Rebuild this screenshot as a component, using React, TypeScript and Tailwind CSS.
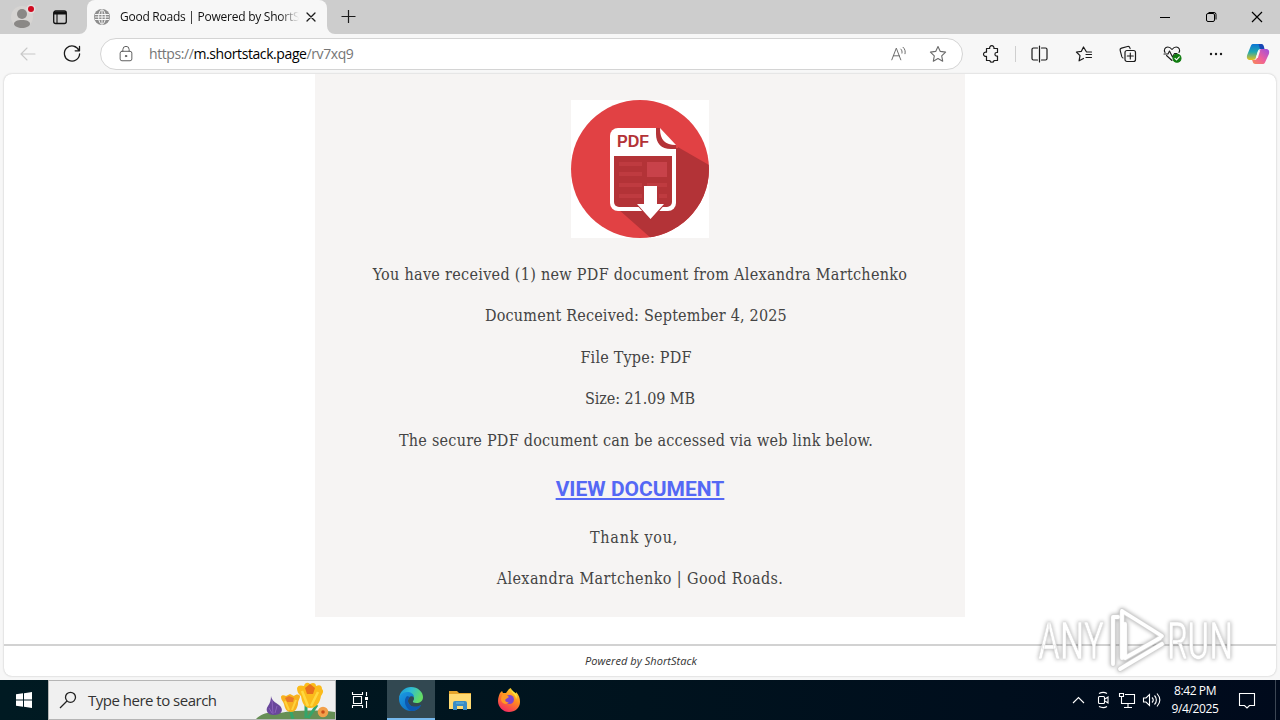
import type { ReactNode } from 'react'

const LINES = [
  { text: 'You have received (1) new PDF document from Alexandra Martchenko', className: 'tracking-[0.3px]' },
  { text: 'Document Received: September 4, 2025', className: 'pr-2 tracking-[0.2px]' },
  { text: 'File Type: PDF', className: 'pr-2 tracking-[0.2px]' },
  { text: 'Size: 21.09 MB', className: 'tracking-[-0.08px]' },
  { text: 'The secure PDF document can be accessed via web link below.', className: 'pr-2 tracking-[0.25px]' },
]

const SIGNATURE = [
  { text: 'Thank you,', className: 'pr-3 tracking-[0.75px]' },
  { text: 'Alexandra Martchenko | Good Roads.', className: 'tracking-[0.4px]' },
]

function Icon({ children, size = 20, className = '' }: { children: ReactNode; size?: number; className?: string }) {
  return (
    <svg
      width={size}
      height={size}
      viewBox="0 0 20 20"
      fill="none"
      stroke="currentColor"
      strokeWidth="1.1"
      strokeLinecap="round"
      strokeLinejoin="round"
      className={`shrink-0 ${className}`}
    >
      {children}
    </svg>
  )
}

function TabBar() {
  return (
    <div className="h-[34px] flex bg-[#cdcdcd]">
      <div className="w-[87px] flex items-center">
        <svg width="28" height="28" viewBox="0 0 28 28" className="ml-2 shrink-0">
          <circle cx="14" cy="14" r="11" fill="#d6d4d2" />
          <circle cx="14" cy="11" r="5" fill="#8a8886" />
          <path d="M6 21c0-2.500 3-4 8-4s8 1.500 8 4c0 2-4 4-8 4s-8-2-8-4z" fill="#8a8886" />
          <circle cx="23" cy="6" r="4.500" fill="#e5dcdc" />
          <circle cx="23" cy="6" r="3" fill="#d00a20" />
        </svg>
        <svg width="16" height="16" viewBox="0 0 16 16" fill="none" stroke="#111" className="ml-4">
          <rect x="1.700" y="2" width="12.600" height="12.500" rx="2" strokeWidth="1.300" />
          <path d="M2 4h12" strokeWidth="3" />
          <path d="M5 5v9" strokeWidth="1.100" />
        </svg>
      </div>
      <div className="relative w-[240px] flex items-center bg-[#f7f7f7] rounded-t-lg">
        <svg width="8" height="8" className="absolute -left-2 bottom-0"><path d="M8 0v8H0a8 8 0 0 0 8-8z" fill="#f7f7f7" /></svg>
        <svg width="8" height="8" className="absolute -right-2 bottom-0"><path d="M0 0v8h8a8 8 0 0 1-8-8z" fill="#f7f7f7" /></svg>
        <svg width="16" height="16" viewBox="0 0 16 16" fill="none" stroke="#f7f7f7" className="ml-[7px] shrink-0">
          <circle cx="8" cy="8" r="8" fill="#8d8d8d" stroke="none" />
          <ellipse cx="8" cy="8" rx="3.400" ry="7.200" />
          <path d="M1 5.500h14M1 10.500h14M8 1v14M.8 8h14.400" />
        </svg>
        <p className="ml-[10px] w-[179px] whitespace-nowrap text-[12px] tracking-[-0.25px] text-[#111] [mask-image:linear-gradient(to_right,black_160px,transparent)]">
          Good Roads | Powered by ShortSt
        </p>
        <Icon size={16} className="ml-[4px] text-[#1b1b1b]"><path d="M5 5l10 10M15 5L5 15" strokeWidth="1.6" /></Icon>
      </div>
      <div className="flex items-center ml-[13px]">
        <svg width="16" height="16" stroke="#1b1b1b" strokeWidth="1.200"><path d="M1.500 7.500h14M8.500 1v13" /></svg>
      </div>
      <div className="ml-auto flex items-center text-black">
        <svg width="138" height="34" viewBox="0 0 138 34" fill="none" stroke="currentColor">
          <path d="M18 17.500h10" />
          <path d="M64.500 15a1.500 1.500 0 0 1 1.500-1.500h5a1.500 1.500 0 0 1 1.500 1.500v5a1.500 1.500 0 0 1-1.500 1.500h-5a1.500 1.500 0 0 1-1.500-1.500zM66.500 12.500h5.500a2 2 0 0 1 2 2v5" />
          <path d="M110 12l10 10M120 12l-10 10" strokeWidth="1.200" />
        </svg>
      </div>
    </div>
  )
}

function AddressBar() {
  return (
    <div className="h-10 flex items-center bg-[#f7f7f7] text-[#1b1b1b]">
      <Icon className="ml-[18px] text-[#c8c8c8]"><path d="M17 10H3M9 4l-6 6 6 6" /></Icon>
      <Icon className="ml-6"><path d="M17 6.500A7.600 7.600 0 1 0 17.600 10M17.500 2.500v4.300h-4.300" strokeWidth="1.3" /></Icon>
      <div className="ml-[18px] w-[863px] h-8 flex items-center rounded-full border border-[#d4d4d4] bg-white">
        <Icon size={18} className="ml-4 text-[#5f5f5f]">
          <path d="M6.500 7V5a3.500 3.500 0 0 1 7 0v2" />
          <rect x="3.500" y="7" width="13" height="10.500" rx="2" />
          <circle cx="10" cy="12.300" r=".8" fill="currentColor" />
        </Icon>
        <p className="ml-[14px] pb-0.5 text-[14px] tracking-[-0.41px] text-[#767676] whitespace-nowrap">
          https://<span className="text-black">m.shortstack.page</span>/rv7xq9
        </p>
        <Icon size={18} className="ml-auto text-[#6b6b6b]">
          <path d="M2 16.500L7 3.500l5 13M3.700 12h6.600M12 4.500c1.300 1.200 1.600 2.700 1.300 4.500M14.500 2.500c2.200 2 2.800 4.500 2.200 7.200" />
        </Icon>
        <Icon size={20} className="ml-5 mr-[14px] text-[#6b6b6b]">
          <path d="M10 2.500l2.300 4.900 5.300.7-3.900 3.700 1 5.400-4.700-2.600-4.700 2.600 1-5.400L2.400 8.100l5.300-.7z" />
        </Icon>
      </div>
      <Icon className="ml-[18px]">
        <path d="M5.500 4.500h3.200a2.200 2.200 0 1 1 4.200 0h3.600v4h-.8a1.800 1.800 0 1 0 0 3.600h.8v4.400h-3.400a2.200 2.200 0 0 1-4.300 0H5.500v-4.200a2.200 2.200 0 1 1 0-4.100z" strokeWidth="1.2" />
      </Icon>
      <div className="ml-[14px] w-px h-4 bg-[#cfcfcf]" />
      <Icon className="ml-[14px]">
        <path d="M7.500 4h-4A1.500 1.500 0 0 0 2 5.500v9A1.500 1.500 0 0 0 3.500 16h4M11.500 4h4A1.500 1.500 0 0 1 17 5.500v9a1.500 1.500 0 0 1-1.500 1.500h-4M9.500 2v16" strokeWidth="1.2" />
      </Icon>
      <Icon className="ml-6">
        <path d="M17.500 8h-5L9.500 3 7.400 7.300l-5 .7 3.600 3.600-.9 5.200L9.500 14.500M12 10.500h5.500M12 13.500h5.500" strokeWidth="1.2" />
      </Icon>
      <Icon className="ml-6">
        <path d="M5 14c-.7-.2-1-.7-1.200-1.300L2.200 6.500A2 2 0 0 1 3.600 4.100L9.500 2.500a2 2 0 0 1 2.400 1.400l.2.800" />
        <rect x="7" y="6.500" width="10.500" height="11" rx="2" strokeWidth="1.2" />
        <path d="M12.300 9v6M9.300 12h6" />
      </Icon>
      <Icon className="ml-6">
        <path d="M3 8.500C1.500 6 3 3 5.800 3 8 3 9 4.200 10 5.500 11 4.200 12 3 14.200 3 17 3 18.500 6 17 8.500M4.500 11.500l5.500 5M2 10h4l1.500-3 3 6 2-3.500H15" />
        <circle cx="15" cy="14.300" r="4" fill="#107c10" stroke="#107c10" />
        <path d="M13 14.300l1.500 1.500 2.800-2.900" stroke="white" />
      </Icon>
      <Icon className="ml-6">
        <g fill="currentColor" stroke="none"><circle cx="5" cy="10" r="1.200" /><circle cx="10" cy="10" r="1.200" /><circle cx="15" cy="10" r="1.200" /></g>
      </Icon>
      <svg width="24" height="24" viewBox="0 0 24 24" className="ml-5">
        <defs>
          <linearGradient id="cpBlue" x1="0" y1="0" x2="0" y2="1"><stop stopColor="#0b74d6" /><stop offset=".5" stopColor="#20a8b0" /><stop offset="1" stopColor="#e9c21c" /></linearGradient>
          <linearGradient id="cpPink" x1="1" y1="0" x2="0" y2="1"><stop stopColor="#9b4fe0" /><stop offset=".55" stopColor="#ef5f9a" /><stop offset="1" stopColor="#f88b54" /></linearGradient>
        </defs>
        <path d="M5 3.500C5.500 2.400 6.500 2 7.500 2h7c2 0 2.500 1.200 3 3l.5 2h-3c-2 0-2.700.8-3.200 2.500l-1.700 5.800C9.500 17.500 8.500 18 6.500 18H4c-3 0-3.600-2.500-2.800-5z" fill="url(#cpBlue)" />
        <path d="M12.500 2H15c2 0 2.500 1.200 3 3l.5 2H14z" fill="#1747b5" />
        <path d="M19 20.500c-.5 1.100-1.500 1.500-2.500 1.500H9.500c-2 0-2.500-1.200-3-3l-.4-1H8c2 0 2.700-.8 3.200-2.500L13 9.500C13.700 7.400 14.500 7 16.500 7H20c3 0 3.700 2.500 2.900 5z" fill="url(#cpPink)" />
        <path d="M12.200 8.500h2l-2.400 7.500h-2z" fill="#f7f7f7" />
      </svg>
    </div>
  )
}

function PdfBadge() {
  return (
    <svg width="138" height="138" viewBox="0 0 138 138" className="bg-white">
      <clipPath id="disc"><circle cx="69" cy="69" r="69" /></clipPath>
      <circle cx="69" cy="69" r="69" fill="#e14144" />
      <path d="M105 46l40 23v70H81L47 109z" fill="#b33337" clipPath="url(#disc)" />
      <path d="M47 28h39l19 18v57a8 8 0 0 1-8 8H47a8 8 0 0 1-8-8V36a8 8 0 0 1 8-8z" fill="white" />
      <path d="M86 27v7c0 9 5 14 14 14h7V27z" fill="#e14144" />
      <path d="M85 28h4c0 12 5 17 16 17v4h-5c-10 0-15-6-15-15z" fill="#b33337" />
      <path d="M89 28l16 17C94 45 89 40 89 28z" fill="white" />
      <path d="M43 56h58v46a5 5 0 0 1-5 5H48a5 5 0 0 1-5-5z" fill="#b33337" />
      <g fill="#bf3b40">
        <path d="M48 62h23v4H48zM48 72h23v4H48zM48 83h23v4H48zM48 94h23v4H48zM76 83h20v4H76zM88 94h8v4h-8z" />
        <path d="M76 62h20v15H76z" fill="#c8424a" />
      </g>
      <path d="M64 103h31l-15 18z" fill="#b33337" />
      <path d="M73 86h13v18h7l-13.500 15L66 104h7z" fill="white" />
      <text x="46" y="47" fontSize="16" fontWeight="bold" fill="#b33337" fontFamily="Liberation Sans, Arial, sans-serif" textLength="32">PDF</text>
    </svg>
  )
}

function Page() {
  return (
    <div className="mx-1 mb-1 h-[602px] flex flex-col overflow-hidden rounded-lg bg-white shadow-[0_0_2px_#b8b8b8]">
      <div className="h-[570px] flex justify-center">
        <div className="w-[650px] h-[543px] pt-[26px] flex flex-col items-center bg-[#f6f4f3] text-[#444444] font-['DejaVu_Serif_Condensed','DejaVu_Serif',serif]">
          <PdfBadge />
          <div className="mt-[15.5px] flex flex-col items-center">
            {LINES.map(line => (
              <p key={line.text} className={`text-[16px] leading-[41.5px] whitespace-nowrap ${line.className}`}>{line.text}</p>
            ))}
          </div>
          <a href="#" className="mt-[0.5px] font-[Roboto,sans-serif] text-[21px] leading-[55.5px] font-bold text-[#5468f5] underline decoration-2 underline-offset-[2px]">
            VIEW DOCUMENT
          </a>
          {SIGNATURE.map(line => (
            <p key={line.text} className={`text-[16px] leading-[41.3px] whitespace-nowrap ${line.className}`}>{line.text}</p>
          ))}
        </div>
      </div>
      <div className="flex-1 flex items-center justify-center border-t-2 border-[#d2d2d2] text-[11px] italic text-[#333]">
        <span className="pl-0.5 tracking-[0.05px]">Powered by ShortStack</span>
      </div>
    </div>
  )
}

function Watermark() {
  return (
    <svg width="208" height="76" viewBox="0 0 208 76" className="absolute left-[1034px] top-[603px] drop-shadow-[0_0_2px_rgba(0,0,0,0.35)]">
      <g fill="white" fontFamily="Roboto, sans-serif" fontSize="52" stroke="#dcdcdc" strokeWidth=".6">
        <text x="4" y="56" textLength="66" lengthAdjust="spacingAndGlyphs">ANY</text>
        <text x="133" y="56" textLength="66" lengthAdjust="spacingAndGlyphs">RUN</text>
      </g>
      <g fill="none" strokeLinejoin="round" strokeLinecap="round">
        <path d="M88 8v47M88 8l40 25M91 21v34l35-20M79 14v47M84 14h-5M86 66l42-25" stroke="#d4d4d4" strokeWidth="5.500" />
        <path d="M88 8v47M88 8l40 25M91 21v34l35-20M79 14v47M84 14h-5M86 66l42-25" stroke="white" strokeWidth="3.800" />
      </g>
    </svg>
  )
}

function SearchFlowers() {
  return (
    <svg width="80" height="38" viewBox="0 0 80 38" className="ml-auto shrink-0">
      <path d="M1 38c5-5 14-8 24-6 16-3 38-3 55-1v7z" fill="#668f55" />
      <path d="M35 28l3 10M51 24v13M62 24l-9 13" stroke="#35a56a" strokeWidth="3" />
      <path d="M16 15c1 5 4 6 8 9 6 5 2 10-5 10s-9-5-6-9c2-3 3-6 3-10z" fill="#69479b" />
      <path d="M17 19l1 14M14 27l3 5M22 25l-2 7" stroke="#8b62bb" />
      <path d="M26 16c0-2 3-2 5-1l4-2 4 2c2-2 5-2 6 0 0 3-2 4-2 8-1 5-3 8-7 8-5 0-6-4-7-8-1-3-3-4-3-7z" fill="#f7b11d" />
      <path d="M30 17l4-2 5 2-1 4h-6z" fill="#ea7a28" />
      <path d="M30 20l4 9M41 19l-4 10" stroke="#ffd23c" strokeWidth="2" />
      <path d="M42 7c1-3 4-3 7-2 1-4 4-4 6-2 3-2 6-1 6 2 4-2 6 0 6 3 2 2 1 4-1 7-1 6-4 12-11 12-6 0-8-6-9-12-3-2-4-5-4-8z" fill="#fbbb1b" />
      <path d="M50 7l5-4 5 4-2 6h-6z" fill="#e9711c" />
      <path d="M47 10l6 15M63 11l-7 14" stroke="#ffd93f" strokeWidth="2.500" />
      <circle cx="68" cy="31" r="5.300" fill="#f2a04a" />
      <circle cx="68" cy="31" r="1.800" fill="#c94d18" />
    </svg>
  )
}

function EdgeLogo() {
  return (
    <svg width="24" height="24" viewBox="0 0 24 24">
      <defs>
        <linearGradient id="edgeTop" x1="0" y1="0" x2="1" y2=".4"><stop stopColor="#1690d8" /><stop offset=".5" stopColor="#30bdd3" /><stop offset="1" stopColor="#63dc65" /></linearGradient>
        <linearGradient id="edgeLow" x1="0" y1="0" x2="1" y2="1"><stop stopColor="#1b9be4" /><stop offset="1" stopColor="#0a60b8" /></linearGradient>
      </defs>
      <path d="M0 11C1 4 6 0 12 0c7 0 12 5 12 10 0 4-3 6-6.500 6-3 0-4-1-3.500-2 2-2 1-6-3-7C7 6 3 8 0 11z" fill="url(#edgeTop)" />
      <path d="M0 12c0-4 4-7 8-7 4 0 7 2 7 5-3-2-6 0-6 4 0 5 7 8 13 4-2 4-5 6-10 6C5 24 0 18 0 12z" fill="url(#edgeLow)" />
      <path d="M8 9c-4 4-2 12 4 15 4 0 8-2 10-6-6 4-13 1-13-4 0-2 1-3 2-4z" fill="#0d58b0" />
    </svg>
  )
}

function Taskbar() {
  return (
    <div className="h-10 flex bg-linear-to-r from-[#001a22] via-[#00131e] to-[#000a1c] text-white">
      <div className="w-12 flex items-center justify-center">
        <svg width="16" height="16" viewBox="0 0 16 16" fill="white"><path d="M0 2.300L7 1.300V7.500H0zM8 1.200L16 0v7.500H8zM0 8.500h7v6.200l-7-1zM8 8.500h8V16l-8-1.200z" /></svg>
      </div>
      <div className="w-72 flex items-center bg-[#f0f0f0] border border-[#b5b5b5] text-[#333]">
        <svg width="18" height="18" viewBox="0 0 18 18" fill="none" stroke="#222" strokeWidth="1.300" className="ml-[10px]"><circle cx="11.500" cy="6.300" r="5" /><path d="M8 10l-7 7" /></svg>
        <span className="ml-[11px] text-[15px] tracking-[-0.5px] whitespace-nowrap">Type here to search</span>
        <SearchFlowers />
      </div>
      <div className="w-[51px] flex items-center pl-[15px]">
        <svg width="18" height="18" viewBox="0 0 18 18" fill="none" stroke="white" strokeWidth="1.100"><path d="M1.500 1v2.500h10V1M1.500 17v-2.500h10V17M2.500 5.500h8v7h-8zM15.500 1v4M15.500 10v7" /><path d="M14 6h3v3h-3z" fill="white" stroke="none" /></svg>
      </div>
      <div className="w-12 flex items-center justify-center bg-[#324851] border-b-2 border-[#76b9ed]"><EdgeLogo /></div>
      <div className="w-[49px] flex items-center justify-center">
        <svg width="22" height="20" viewBox="0 0 22 20">
          <path d="M0 1h8l2 2h12v16H0z" fill="#e5a52c" />
          <path d="M0 4h22v15H0z" fill="#ffda72" />
          <path d="M4 20v-7a2 2 0 0 1 2-2h10a2 2 0 0 1 2 2v7h-4v-4H8v4z" fill="#398bc3" />
          <path d="M7 13h8" stroke="#66b8df" />
        </svg>
      </div>
      <div className="w-[49px] flex items-center justify-center">
        <svg width="24" height="24" viewBox="0 0 24 24">
          <defs><linearGradient id="fox" x1=".8" y1="0" x2=".3" y2="1"><stop stopColor="#ffe32e" /><stop offset=".45" stopColor="#ff8b20" /><stop offset="1" stopColor="#f52863" /></linearGradient></defs>
          <path d="M3 5l2-2 1 2 3 0 3-4 2-1c0 3 3 4 5 6l0-2c3 3 4 6 4 10 0 6-5 10-11 10S1 19 1 13c0-3 1-6 2-8z" fill="url(#fox)" />
          <circle cx="12.500" cy="11.500" r="4.500" fill="#8045cc" />
          <path d="M5 7c3-1 5 0 7 2l-3 2c-2 1 0 4 3 3-3 4-8 1-8-3z" fill="#ff9825" />
          <path d="M14 1c0 4 5 5 5 10 2-3 0-6-2-7z" fill="#ffe43a" />
        </svg>
      </div>
      <div className="ml-auto flex items-center">
        <svg width="94" height="22" viewBox="0 0 94 22" fill="none" stroke="white" strokeWidth="1.100">
          <path d="M6 14l5.500-5.500L17 14" />
          <rect x="31.500" y="7.500" width="6" height="7" rx="1" />
          <path d="M38 10l3-2v6l-3-2M32 4.500c3-1.500 5.500-1.500 8 0M32 17.500c3 1.500 5.500 1.500 8 0" />
          <path d="M58 5.500h9.500v9H54.500V12M61 15v3M57 18.500h8M52.500 4.500h4v3h-4zM54.500 8v4" />
          <path d="M76.500 9h2.500l3.500-3.500v11L79 13h-2.500zM85 8.500c1.500 1.500 1.500 3.500 0 5M87.500 6.500c2.500 2.500 2.500 6.500 0 9M90 4.500c3.500 4 3.500 9 0 13" />
        </svg>
        <div className="ml-[9px] w-[50px] text-center text-[12px] leading-[18px] tracking-[-0.4px] whitespace-nowrap">
          <p>8:42 PM</p>
          <p>9/4/2025</p>
        </div>
        <svg width="18" height="18" viewBox="0 0 18 18" fill="none" stroke="white" strokeWidth="1.100" className="ml-[18px]"><path d="M1.500 2.500h15v12h-5L9 17l-2.500-2.500h-5z" /></svg>
        <div className="ml-[19px] mr-1 w-px h-10 bg-[#3c4654]" />
      </div>
    </div>
  )
}

export default function App() {
  return (
    <div className="relative w-[1280px] h-[720px] overflow-hidden bg-[#f7f7f7] font-['Open_Sans','Noto_Sans',sans-serif]">
      <TabBar />
      <AddressBar />
      <Page />
      <Taskbar />
      <Watermark />
    </div>
  )
}
